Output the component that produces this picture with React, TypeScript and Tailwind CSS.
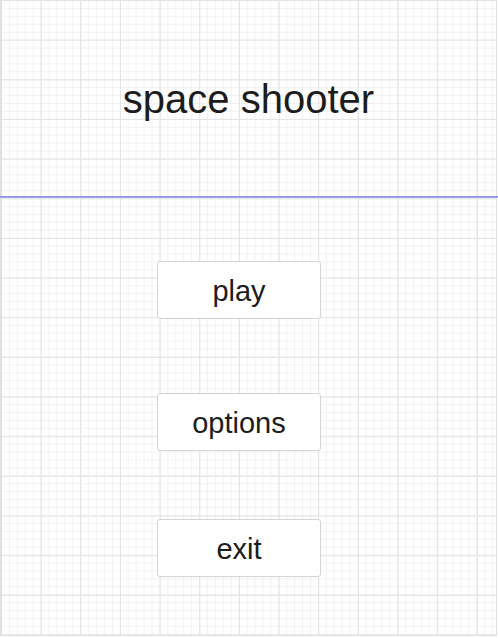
const MENU = [
  { label: 'play', mt: 'mt-[63px]' },
  { label: 'options', mt: 'mt-[74px]' },
  { label: 'exit', mt: 'mt-[68px]' },
];

export default function App() {
  return (
    <div className="w-[498px] h-[638px] bg-white overflow-hidden font-['Liberation_Sans',Arial,sans-serif] text-[#1c1c1c]">
      <div className="relative w-[497px] h-[636px] border-l-2 border-r border-b border-[#e0e0e0] [background-image:linear-gradient(to_right,#e3e3e3_1px,transparent_1px),linear-gradient(to_bottom,#e3e3e3_1px,transparent_1px),linear-gradient(to_right,#f1f1f1_1px,transparent_1px),linear-gradient(to_bottom,#f1f1f1_1px,transparent_1px)] [background-size:39.67px_39.67px,39.67px_39.67px,7.93px_7.93px,7.93px_7.93px] [background-position:-1px_0px]">
        {/* title */}
        <div className="h-[196px] pt-[75px] flex justify-center">
          <h1 className="text-[40px] leading-[48px] font-normal -ml-px">space shooter</h1>
        </div>

        <div className="h-[2px] -ml-[2px] w-[499px] bg-[#a9a9ee] border-t border-[#8e8ee4]" />

        {/* menu */}
        <div className="flex flex-col items-start pl-[155px]">
          {MENU.map(({ label, mt }) => (
            <button
              key={label}
              className={`${mt} w-[164px] h-[58px] pt-[3px] bg-white border border-[#d4d4d4] rounded-[3px] text-[29px] leading-none flex items-center justify-center`}
            >
              {label}
            </button>
          ))}
        </div>
      </div>
    </div>
  );
}
